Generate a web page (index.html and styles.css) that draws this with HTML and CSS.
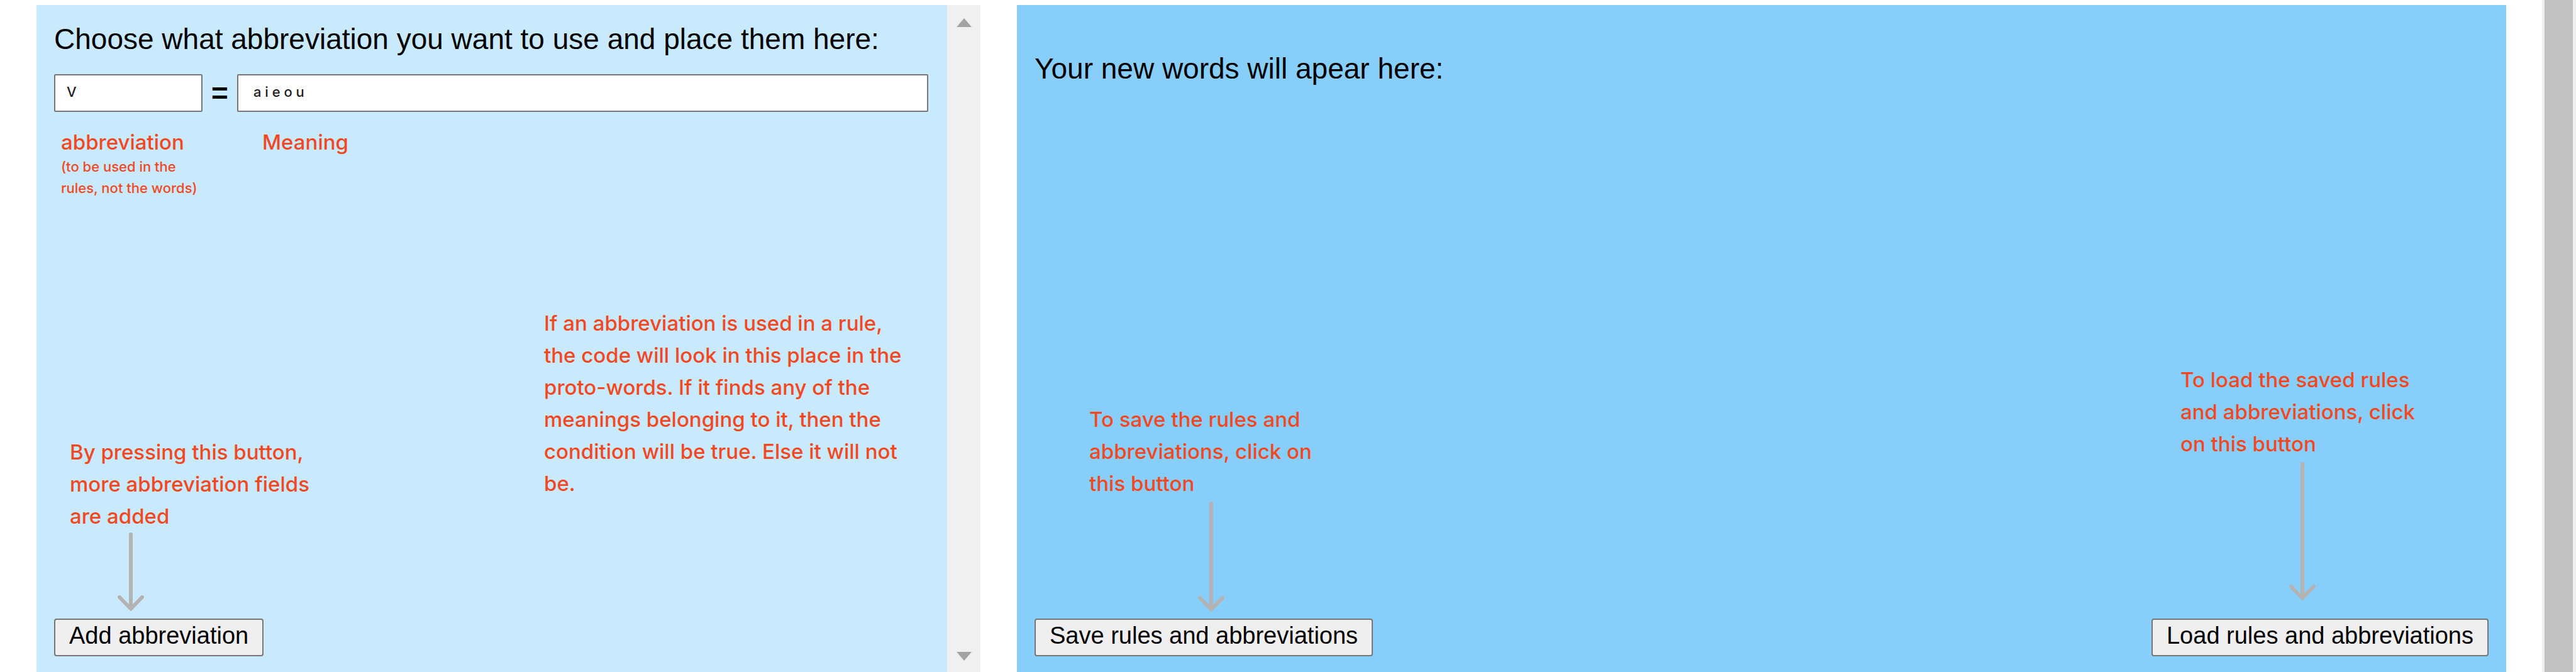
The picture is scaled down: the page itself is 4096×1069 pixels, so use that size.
FILE: index.html
```html
<!DOCTYPE html>
<html lang="en">
<head>
  <meta charset="utf-8">
  <title>Abbreviations and new words</title>
  <link rel="stylesheet" href="styles.css">
</head>
<body>
  <div class="page">
    <main class="panels">
      <section class="box">
        <div class="panel panel-abbreviations">
          <h2 class="title">Choose what abbreviation you want to use and place them here:</h2>
          <div class="fields">
            <input class="field field-short" id="abbreviation" type="text" value="V">
            <span class="equals">=</span>
            <input class="field field-meaning" id="meaning" type="text" value="a i e o u">
          </div>
          <div class="captions">
            <label class="caption caption-short" for="abbreviation">abbreviation
              <small class="hint">(to be used in the rules, not the words)</small>
            </label>
            <label class="caption" for="meaning">Meaning</label>
          </div>
          <div class="footer">
            <div class="action action-add">
              <p class="note note-add">By pressing this button, more abbreviation fields are added</p>
              <svg class="arrow arrow-add" width="42" height="125" viewBox="0 0 42 125" aria-hidden="true">
                <path d="M21 3V121M3 103L21 121.500L39 103"/>
              </svg>
              <button class="button" type="button">Add abbreviation</button>
            </div>
            <p class="note note-rule">If an abbreviation is used in a rule, the code will look in this place in the proto-words. If it finds any of the meanings belonging to it, then the condition will be true. Else it will not be.</p>
          </div>
        </div>
        <div class="scroll" aria-hidden="true">
          <svg width="24" height="14" viewBox="0 0 24 14"><path d="M12 0L24 14H0Z"/></svg>
          <svg width="24" height="14" viewBox="0 0 24 14"><path d="M0 0H24L12 14Z"/></svg>
        </div>
      </section>

      <section class="panel panel-words">
        <h2 class="title title-words">Your new words will apear here:</h2>
        <div class="footer">
          <div class="action action-save">
            <p class="note note-save">To save the rules and abbreviations, click on this button</p>
            <svg class="arrow arrow-save" width="42" height="175" viewBox="0 0 42 175" aria-hidden="true">
              <path d="M21 3V171M3 153L21 171.500L39 153"/>
            </svg>
            <button class="button" type="button">Save rules and abbreviations</button>
          </div>
          <div class="action action-load">
            <p class="note note-load">To load the saved rules and abbreviations, click on this button</p>
            <svg class="arrow arrow-load" width="42" height="220" viewBox="0 0 42 220" aria-hidden="true">
              <path d="M21 3V216M3 198L21 216.500L39 198"/>
            </svg>
            <button class="button" type="button">Load rules and abbreviations</button>
          </div>
        </div>
      </section>
    </main>
    <div class="page-scroll" aria-hidden="true"><div class="thumb"></div></div>
  </div>
</body>
</html>
```
FILE: styles.css
```css
* {
  box-sizing: border-box;
}

body {
  margin: 0;
  background: #fff;
  color: #000;
  font-family: "Liberation Sans", Arial, sans-serif;
}

.page {
  display: flex;
  min-height: 100vh;
}

.panels {
  flex: 1;
  display: grid;
  grid-template-columns: 1501fr 2368fr;
  column-gap: 58px;
  padding: 8px 57px 0 58px;
}

.box {
  display: flex;
}

.panel {
  flex: 1;
  display: flex;
  flex-direction: column;
  padding: 28px 28px 25px;
}

.panel-abbreviations {
  background: #c9e9fd;
}

.panel-words {
  background: #87cefa;
}

.title {
  margin: 0;
  font-size: 46px;
  font-weight: 400;
  line-height: 52px;
}

.title-words {
  margin-top: 47px;
}

/* abbreviation = meaning */
.fields {
  display: flex;
  align-items: center;
  gap: 14px;
  margin: 30px 2px 0 0;
}

.field {
  height: 60px;
  border: 2px solid #767676;
  border-radius: 2px;
  background: #fff;
  color: #1e1e1e;
  font-family: Inter, sans-serif;
  font-size: 22px;
  font-weight: 500;
}

.field-short {
  width: 236px;
  padding: 0 18px 4px;
}

.field-meaning {
  flex: 1;
  min-width: 0;
  padding: 0 24px 4px;
}

.equals {
  font-size: 46px;
  font-weight: 700;
  line-height: 52px;
}

.captions {
  display: flex;
  margin-top: 27px;
  padding-left: 11px;
}

.caption {
  color: #f24822;
  font-family: Inter, sans-serif;
  font-size: 33px;
  font-weight: 500;
  line-height: 43px;
}

.caption-short {
  width: 320px;
}

.hint {
  display: block;
  width: 230px;
  font-size: 22px;
  line-height: 34px;
}

/* notes, arrows and the buttons they point to */
.footer {
  display: flex;
  justify-content: space-between;
  align-items: flex-end;
  margin-top: auto;
}

.action {
  display: flex;
  flex-direction: column;
  align-items: flex-start;
}

.note {
  margin: 0;
  color: #f24822;
  font-family: Inter, sans-serif;
  font-size: 33px;
  font-weight: 500;
  line-height: 51px;
}

.note-add {
  width: 392px;
  margin-left: 25px;
}

.note-rule {
  width: 588px;
  margin: 0 25px 249px 0;
}

.note-save {
  width: 364px;
  margin-left: 87px;
}

.note-load {
  width: 384px;
  margin-left: 46px;
}

.arrow {
  fill: none;
  stroke: #b3b3b3;
  stroke-width: 6px;
  stroke-linecap: round;
  stroke-linejoin: round;
}

.arrow-add {
  margin: 0 0 12px 101px;
}

.arrow-save {
  margin: 3px 0 11px 260px;
}

.arrow-load {
  margin: 3px 0 29px 219px;
}

.button {
  height: 60px;
  padding: 0 22px 5px;
  border: 2px solid #767676;
  border-radius: 4px;
  background: #efefef;
  color: #000;
  font-family: "Liberation Sans", Arial, sans-serif;
  font-size: 38px;
  white-space: nowrap;
}

.scroll {
  display: flex;
  flex-direction: column;
  justify-content: space-between;
  align-items: center;
  width: 53px;
  padding: 21px 0 18px;
  background: #f0f0f0;
}

.scroll svg {
  fill: #a3a3a3;
}

.page-scroll {
  display: flex;
  width: 54px;
  padding: 0 5px 0 4px;
  background: #f0f0f0;
}

.thumb {
  flex: 1;
  background: #c1c1c1;
}
```
